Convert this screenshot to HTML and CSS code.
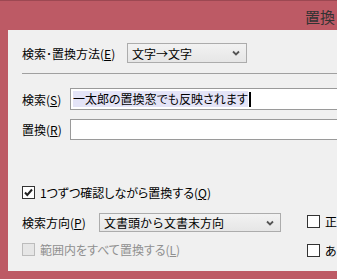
FILE: index.html
```html
<!DOCTYPE html>
<html lang="ja">
<head>
    <meta charset="UTF-8">
    <title>置換</title>
    <link rel="stylesheet" href="styles.css">
</head>
<body>
    <div class="window">
        <div class="titlebar"><span class="title">置換</span></div>
        <div class="content">
            <div class="row method">
                <label class="lbl w-method">検索･置換方法(<u>E</u>)</label>
                <div class="select sel-method">
                    <span>文字→文字</span>
                    <svg class="chev" width="8" height="6" viewBox="0 0 8 6"><path d="M1 1.5 L4 4.5 L7 1.5" fill="none" stroke="#555" stroke-width="1.8"/></svg>
                </div>
            </div>
            <div class="sep"></div>
            <div class="row search">
                <label class="lbl w-field">検索(<u>S</u>)</label>
                <div class="field"><span class="hl">一太郎の置換窓でも反映されます</span><span class="caret"></span></div>
            </div>
            <div class="row replace">
                <label class="lbl w-field">置換(<u>R</u>)</label>
                <div class="field"></div>
            </div>
            <div class="row confirm">
                <span class="box checked"><svg width="11" height="11" viewBox="0 0 11 11"><path d="M2 5.5 L4.3 8 L9 2.5" fill="none" stroke="#222" stroke-width="2"/></svg></span>
                <span class="cb-text">1つずつ確認しながら置換する(<u>Q</u>)</span>
            </div>
            <div class="options">
                <div class="left">
                    <div class="row direction">
                        <label class="lbl w-dir">検索方向(<u>P</u>)</label>
                        <div class="select sel-dir">
                            <span>文書頭から文書末方向</span>
                            <svg class="chev" width="8" height="6" viewBox="0 0 8 6"><path d="M1 1.5 L4 4.5 L7 1.5" fill="none" stroke="#555" stroke-width="1.8"/></svg>
                        </div>
                    </div>
                    <div class="row range disabled">
                        <span class="box"></span>
                        <span class="cb-text">範囲内をすべて置換する(<u>L</u>)</span>
                    </div>
                </div>
                <div class="right">
                    <div class="row opt"><span class="box"></span><span class="cb-text">正規表現</span></div>
                    <div class="row opt"><span class="box"></span><span class="cb-text">あいまい検索</span></div>
                </div>
            </div>
        </div>
        <div class="bottom"></div>
    </div>
</body>
</html>
```

FILE: styles.css
```css
body {
    margin: 0;
    font-family: "Noto Sans CJK JP", "Noto Sans", sans-serif;
    font-size: 12px;
    color: #000;
}
.window {
    width: 337px;
    height: 279px;
    overflow: hidden;
    background: #bd5a65;
    border-top: 1px solid #9c4852;
    box-sizing: border-box;
}
.titlebar {
    height: 29px;
    display: flex;
    align-items: center;
    justify-content: flex-end;
    padding-right: 2px;
}
.title {
    font-size: 15px;
    color: #333;
    line-height: 15px;
    margin-top: 2px;
}
.content {
    width: 440px;
    height: 241px;
    margin-left: 8px;
    background: #f0f0f0;
    padding-left: 14px;
    padding-top: 13px;
    box-sizing: border-box;
}
.row {
    display: flex;
    align-items: center;
}
.lbl {
    white-space: nowrap;
    flex-shrink: 0;
}
.w-method { width: 105px; }
.w-field { width: 48px; }
.w-dir { width: 77px; }
.select {
    display: flex;
    align-items: center;
    justify-content: space-between;
    border: 1px solid #acacac;
    background: linear-gradient(#f2f2f2, #e6e6e6);
    box-sizing: border-box;
    padding: 0 6px 0 4px;
}
.sel-method {
    width: 120px;
    height: 20px;
}
.sel-dir {
    width: 183px;
    height: 19px;
}
.sep {
    margin-top: 10px;
    height: 0;
    border-top: 1px solid #a0a0a0;
}
.search { margin-top: 14px; }
.replace { margin-top: 9px; }
.field {
    flex: 1;
    margin-right: 10px;
    border: 1px solid #9a9a9a;
    background: #fff;
    box-sizing: border-box;
    display: flex;
    align-items: center;
    padding-left: 2px;
}
.search .field { height: 22px; }
.replace .field { height: 21px; }
.hl {
    background: #e4e4f7;
    line-height: 16px;
    font-feature-settings: "palt";
}
.caret {
    width: 2px;
    height: 15px;
    background: #000;
    margin-left: 1px;
}
.box {
    width: 13px;
    height: 13px;
    border: 1px solid #333;
    background: #fff;
    box-sizing: border-box;
    flex-shrink: 0;
    display: flex;
    align-items: center;
    justify-content: center;
}
.cb-text {
    margin-left: 5px;
    white-space: nowrap;
    font-feature-settings: "palt";
}
.confirm { margin-top: 44px; }
.options {
    display: flex;
    margin-top: 12px;
}
.left { width: 259px; }
.range { margin-top: 9px; }
.disabled .box {
    border-color: #bcbcbc;
    background: #e6e6e6;
}
.disabled .cb-text { color: #8f8f8f; }
.right {
    margin-left: 26px;
    padding-top: 2px;
}
.opt { height: 13px; }
.opt + .opt { margin-top: 16px; }
.bottom { height: 8px; }
```
